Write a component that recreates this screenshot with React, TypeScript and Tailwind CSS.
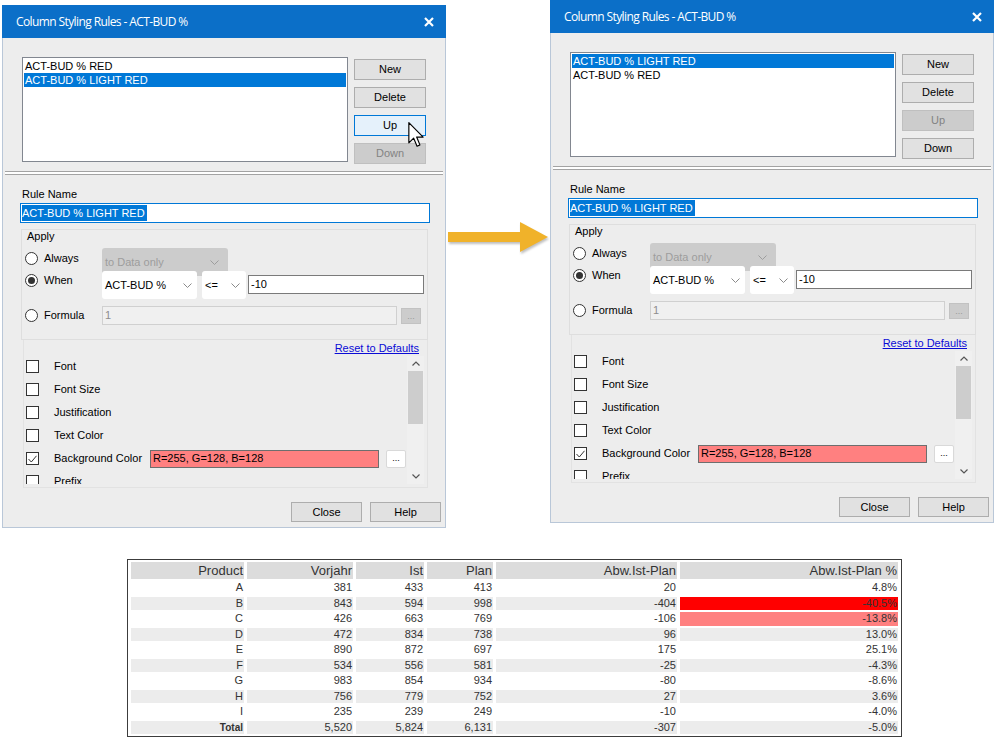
import React from 'react';

const ui = "font-['Liberation_Sans',Arial,sans-serif]";

const Chevron = ({ color = '#8a8a8a' }: { color?: string }) => (
  <svg width="9" height="5" viewBox="0 0 9 5">
    <path d="M0.5 0.5 L4.5 4.5 L8.5 0.5" fill="none" stroke={color} strokeWidth="1" />
  </svg>
);

const Radio = ({ checked = false }: { checked?: boolean }) => (
  <span className="w-[13px] h-[13px] rounded-full border border-[#333] bg-white flex items-center justify-center shrink-0">
    {checked && <span className="w-[7px] h-[7px] rounded-full bg-[#333]" />}
  </span>
);

const Check = ({ checked = false }: { checked?: boolean }) => (
  <span className="w-[13px] h-[13px] border border-[#333] bg-white flex items-center justify-center shrink-0">
    {checked && (
      <svg width="9" height="8" viewBox="0 0 9 8">
        <path d="M0.5 4 L3.3 7 L8.5 0.8" fill="none" stroke="#333" strokeWidth="1" />
      </svg>
    )}
  </span>
);

type BtnState = 'normal' | 'hover' | 'disabled';

const WinButton = ({ label, state = 'normal', className = '' }: { label: string; state?: BtnState; className?: string }) => {
  const look =
    state === 'hover'
      ? 'bg-[#e5f1fb] border-[#0078d7] text-black'
      : state === 'disabled'
      ? 'bg-[#cccccc] border-[#bfbfbf] text-[#838383]'
      : 'bg-[#e1e1e1] border-[#adadad] text-black';
  return (
    <div className={`border flex items-center justify-center text-[11px] leading-none ${look} ${className}`}>
      {label}
    </div>
  );
};

const Cursor = () => (
  <svg width="16" height="26" viewBox="0 0 12 20" className="absolute left-[406px] top-[117px]">
    <path d="M0.5 0.5 L0.5 16 L4.2 12.4 L6.8 18.6 L9 17.6 L6.5 11.6 L11.5 11.6 Z" fill="white" stroke="black" strokeWidth="0.9" strokeLinejoin="round" />
  </svg>
);

type DialogProps = {
  items: string[];
  selected: number;
  up: BtnState;
  down: BtnState;
  cursor?: boolean;
  className?: string;
};

const options = ['Font', 'Font Size', 'Justification', 'Text Color', 'Background Color', 'Prefix'];

function Dialog({ items, selected, up, down, cursor, className = '' }: DialogProps) {
  return (
    <div className={`relative w-[444px] flex flex-col ${ui} text-black ${className}`}>
      {/* title bar */}
      <div className="h-[33px] bg-[#0b6fc8] flex items-center justify-between pl-[14px] pr-[12px] text-white">
        <span className="font-['Open_Sans',sans-serif] text-[12px] tracking-[-0.6px]">Column Styling Rules - ACT-BUD %</span>
        <svg width="10" height="10" viewBox="0 0 10 10">
          <path d="M1 1 L9 9 M9 1 L1 9" stroke="white" strokeWidth="2.2" />
        </svg>
      </div>

      <div className="h-[490px] bg-[#ededed] border-x border-b border-[#b9c7d8] flex flex-col">
        {/* rules list + buttons */}
        <div className="flex gap-[6px] pl-[19px] pt-[19px]">
          <div className="w-[326px] h-[105px] bg-white border border-[#828790] p-[1px] text-[11px] leading-[14px]">
            {items.map((it, i) => (
              <div key={it} className={`h-[14px] px-[1px] ${i === selected ? 'bg-[#0078d7] text-white' : ''}`}>
                {it}
              </div>
            ))}
          </div>
          <div className="flex flex-col gap-[7px] pt-[2px]">
            <WinButton label="New" className="w-[72px] h-[21px]" />
            <WinButton label="Delete" className="w-[72px] h-[21px]" />
            <WinButton label="Up" state={up} className="w-[72px] h-[21px]" />
            <WinButton label="Down" state={down} className="w-[72px] h-[21px]" />
          </div>
        </div>

        {/* separator */}
        <div className="mt-[7px] mx-[2px] h-[4px] border-y border-[#a3a3a3] bg-white" />

        {/* rule name */}
        <div className="mt-[13px] pl-[19px] text-[11px] leading-[13px]">Rule Name</div>
        <div className="mt-[2px] ml-[17px] w-[410px] h-[20px] bg-white border border-[#0078d7] flex items-center px-[1px]">
          <span className="bg-[#0078d7] text-white text-[11px] leading-[16px] pr-[2px]">ACT-BUD % LIGHT RED</span>
        </div>

        {/* apply group */}
        <div className="mt-[6px] ml-[18px] w-[407px] border border-[#dedede] flex flex-col pb-[14px] text-[11px]">
          <div className="pl-[5px] leading-[13px]">Apply</div>

          <div className="mt-[5px] h-[28px] flex pl-[3px]">
            <div className="w-[77px] h-[20px] flex items-center gap-[6px]">
              <Radio />
              <span>Always</span>
            </div>
            <div className="w-[126px] h-[28px] rounded-[3px] bg-[#cccccc] flex items-center justify-between pl-[3px] pr-[9px] text-[#9d9d9d]">
              <span>to Data only</span>
              <Chevron color="#9d9d9d" />
            </div>
          </div>

          <div className="-mt-[5px] h-[28px] flex pl-[3px] relative">
            <div className="w-[77px] h-[18px] flex items-center gap-[6px]">
              <Radio checked />
              <span>When</span>
            </div>
            <div className="w-[95px] h-[28px] rounded-[3px] bg-white flex items-center justify-between pl-[3px] pr-[5px]">
              <span>ACT-BUD %</span>
              <Chevron />
            </div>
            <div className="ml-[5px] w-[44px] h-[28px] rounded-[3px] bg-white flex items-center justify-between pl-[3px] pr-[6px]">
              <span>&lt;=</span>
              <Chevron />
            </div>
            <div className="ml-[2px] mt-[4px] w-[176px] h-[19px] bg-white border border-[#7a7a7a] flex items-center px-[2px]">
              -10
            </div>
          </div>

          <div className="mt-[7px] h-[19px] flex pl-[3px]">
            <div className="w-[77px] h-[19px] flex items-center gap-[6px]">
              <Radio />
              <span>Formula</span>
            </div>
            <div className="w-[295px] h-[19px] bg-[#f0f0f0] border border-[#d0d0d0] flex items-center px-[2px] text-[#8d8d8d]">1</div>
            <div className="ml-[4px] mt-[2px] w-[20px] h-[16px] bg-[#cccccc] border border-[#c2c2c2] flex items-center justify-center text-[9px] text-[#9a9a9a] leading-none">
              ...
            </div>
          </div>
        </div>

        {/* styling options panel */}
        <div className="ml-[20px] w-[405px] h-[148px] border-x border-b border-[#e2e2e2] flex flex-col text-[11px]">
          <div className="h-[16px] flex items-center justify-end pr-[8px]">
            <span className="text-[#0b0bd6] underline leading-[13px]">Reset to Defaults</span>
          </div>
          <div className="h-[128px] flex">
            <div className="flex-1 overflow-hidden -mt-[1px]">
              {options.map((o) => (
                <div key={o} className="h-[23px] flex items-center pl-[2px]">
                  <Check checked={o === 'Background Color'} />
                  <span className="ml-[15px] w-[96px]">{o}</span>
                  {o === 'Background Color' && (
                    <>
                      <div className="w-[229px] h-[18px] bg-[#ff8080] border border-[#6e6e6e] flex items-center px-[2px]">
                        R=255, G=128, B=128
                      </div>
                      <div className="ml-[7px] w-[20px] h-[18px] rounded-[2px] bg-white border border-[#d9d9d9] flex items-center justify-center text-[9px] leading-none">
                        ...
                      </div>
                    </>
                  )}
                </div>
              ))}
            </div>
            <div className="w-[17px] h-[128px] mr-[3px] bg-[#f0f0f0] flex flex-col items-center">
              <div className="h-[15px] flex items-center">
                <svg width="8" height="5" viewBox="0 0 8 5">
                  <path d="M0.5 4.5 L4 1 L7.5 4.5" fill="none" stroke="#555" strokeWidth="1.2" />
                </svg>
              </div>
              <div className="w-[15px] h-[53px] bg-[#cdcdcd]" />
              <div className="flex-1" />
              <div className="h-[15px] flex items-center">
                <svg width="8" height="5" viewBox="0 0 8 5">
                  <path d="M0.5 0.5 L4 4 L7.5 0.5" fill="none" stroke="#555" strokeWidth="1.2" />
                </svg>
              </div>
            </div>
          </div>
        </div>

        {/* bottom buttons */}
        <div className="mt-[14px] flex justify-end gap-[8px] pr-[4px]">
          <WinButton label="Close" className="w-[71px] h-[20px]" />
          <WinButton label="Help" className="w-[71px] h-[20px]" />
        </div>
      </div>
      {cursor && <Cursor />}
    </div>
  );
}

const Arrow = () => (
  <svg width="104" height="46" viewBox="0 0 104 46" className="mt-[215px] shrink-0 drop-shadow-[1px_2px_1px_rgba(0,0,0,0.25)]">
    <rect x="2" y="17" width="73" height="10" fill="#f0b22a" />
    <polygon points="74,7 102,22 74,37" fill="#f0b22a" />
  </svg>
);

const rows: [string, string, string, string, string, string][] = [
  ['A', '381', '433', '413', '20', '4.8%'],
  ['B', '843', '594', '998', '-404', '-40.5%'],
  ['C', '426', '663', '769', '-106', '-13.8%'],
  ['D', '472', '834', '738', '96', '13.0%'],
  ['E', '890', '872', '697', '175', '25.1%'],
  ['F', '534', '556', '581', '-25', '-4.3%'],
  ['G', '983', '854', '934', '-80', '-8.6%'],
  ['H', '756', '779', '752', '27', '3.6%'],
  ['I', '235', '239', '249', '-10', '-4.0%'],
  ['Total', '5,520', '5,824', '6,131', '-307', '-5.0%'],
];

function ResultTable() {
  const headers = ['Product', 'Vorjahr', 'Ist', 'Plan', 'Abw.Ist-Plan', 'Abw.Ist-Plan %'];
  const widths = ['w-[113px]', 'w-[106px]', 'w-[68px]', 'w-[66px]', 'w-[181px]', 'w-[218px]'];
  return (
    <table className={`ml-[127px] mt-[31px] border border-[#3c3c3c] border-separate border-spacing-x-[3px] border-spacing-y-[2px] ${ui} text-[#333]`}>
      <thead>
        <tr>
          {headers.map((h, i) => (
            <th key={h} className={`${widths[i]} h-[17px] bg-[#dcdcdc] text-right font-normal text-[13px] leading-[17px] pr-[1px] p-0`}>
              {h}
            </th>
          ))}
        </tr>
      </thead>
      <tbody>
        {rows.map((r, ri) => {
          const gray = ri % 2 === 1;
          return (
            <tr key={r[0]}>
              {r.map((c, ci) => {
                let bg = gray ? 'bg-[#ececec]' : 'bg-white';
                if (ci === 5 && ri === 1) bg = 'bg-[#ff0000]';
                if (ci === 5 && ri === 2) bg = 'bg-[#ff8080]';
                const bold = ci === 0 && r[0] === 'Total' ? 'font-bold text-[10px]' : 'text-[11px]';
                return (
                  <td key={ci} className={`h-[13.5px] p-0 pr-[1px] text-right leading-[13.5px] ${bg} ${bold}`}>
                    {c}
                  </td>
                );
              })}
            </tr>
          );
        })}
      </tbody>
    </table>
  );
}

export default function App() {
  return (
    <div className="w-[999px] h-[744px] bg-white overflow-hidden">
      <div className="flex items-start">
        <Dialog
          className="mt-[5px] ml-[2px]"
          items={['ACT-BUD % RED', 'ACT-BUD % LIGHT RED']}
          selected={1}
          up="hover"
          down="disabled"
          cursor
        />
        <Arrow />
        <Dialog items={['ACT-BUD % LIGHT RED', 'ACT-BUD % RED']} selected={0} up="disabled" down="normal" />
      </div>
      <ResultTable />
    </div>
  );
}
